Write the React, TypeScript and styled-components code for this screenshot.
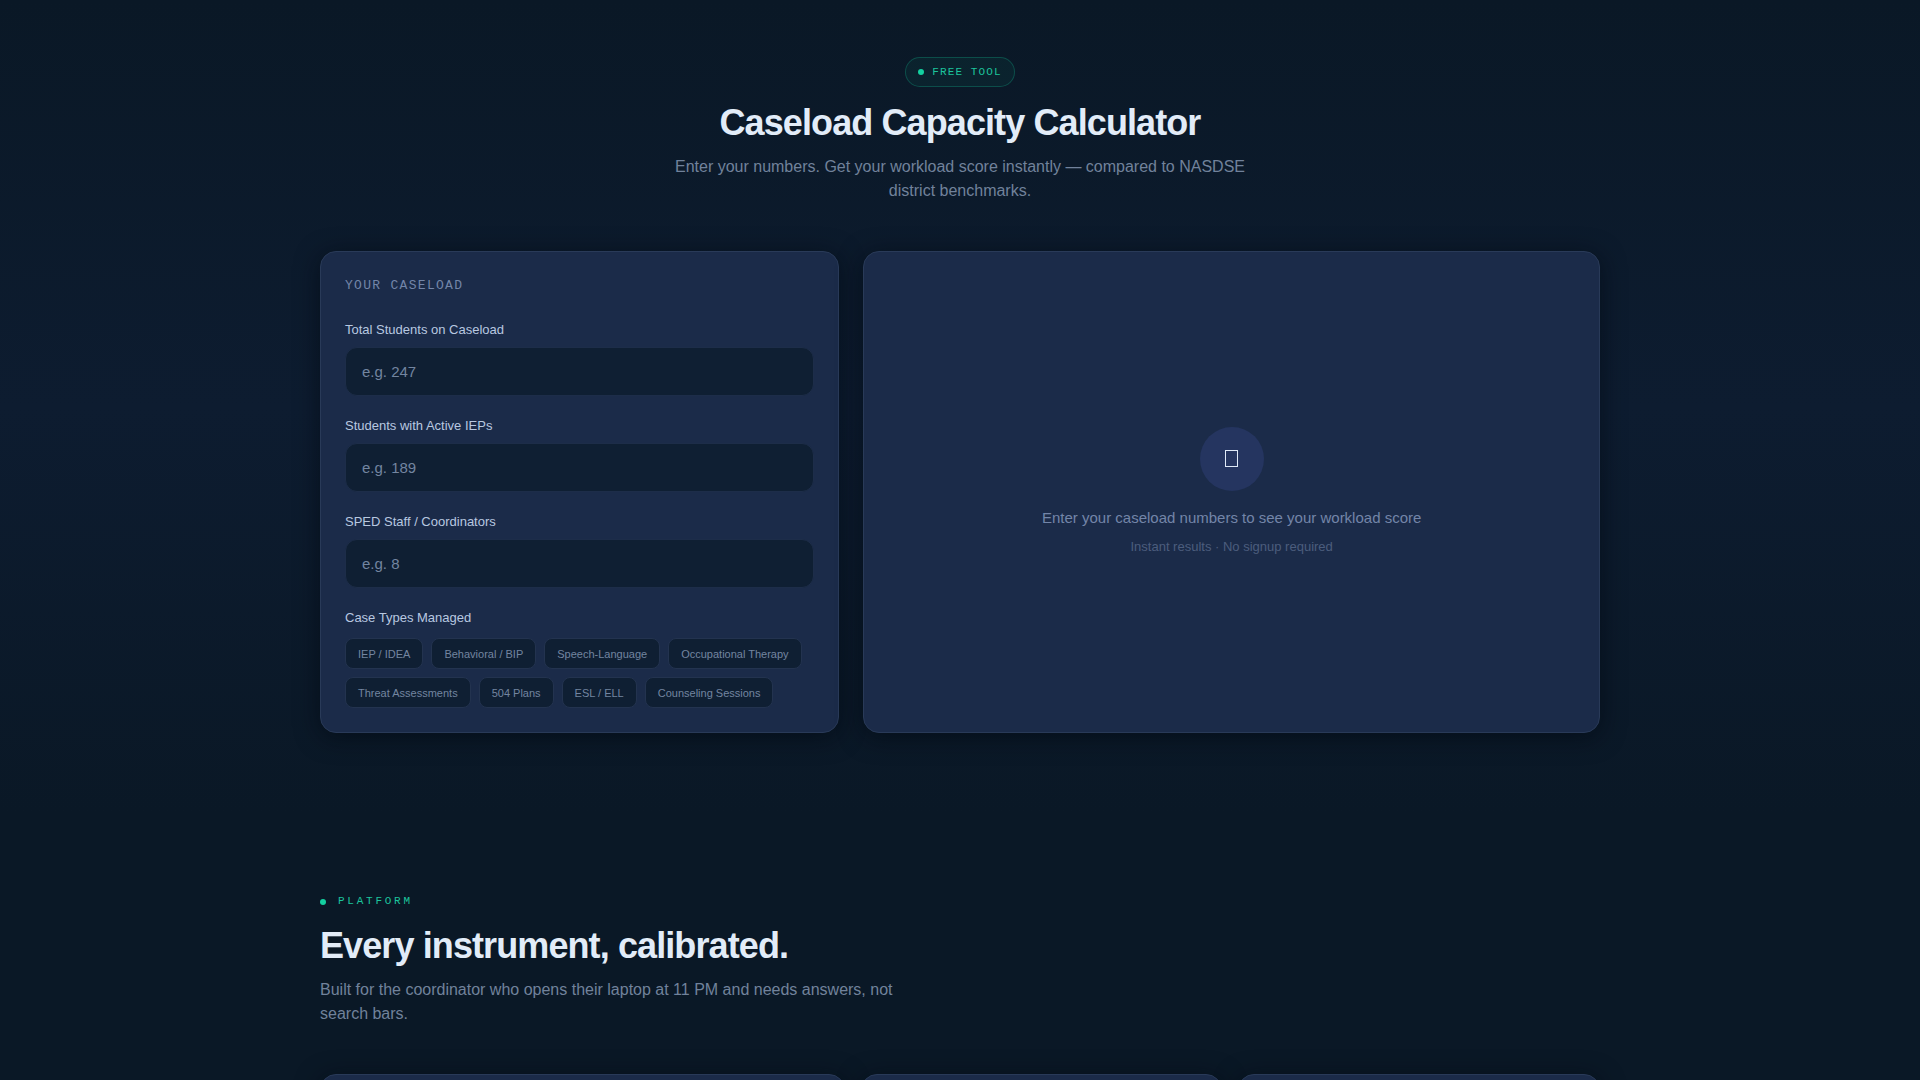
import React, { useState } from "react";
import styled, { createGlobalStyle } from "styled-components";

const sans = `"Liberation Sans", Arial, Helvetica, sans-serif`;
const mono = `"Liberation Mono", "Courier New", monospace`;

const GlobalStyle = createGlobalStyle`
  * { box-sizing: border-box; }
  html { background: #0a1826; }
  body {
    margin: 0;
    min-height: 100vh;
    color: #e2ecf8;
    font-family: ${sans};
    font-size: 16px;
    line-height: 24px;
  }
  h1, h2, p, fieldset { margin: 0; }
`;

const Page = styled.main`
  height: 100vh;
  overflow: hidden;
`;

const CalculatorSection = styled.section`
  padding: 57px 24px 80px;
  background: linear-gradient(180deg, #0a1826 0%, #0d1c30 50%, #0a1826 100%);
`;

const PlatformSection = styled.section`
  padding: 80px 24px;
`;

const Container = styled.div`
  max-width: 1280px;
  margin: 0 auto;
`;

const Hero = styled.header`
  display: flex;
  flex-direction: column;
  align-items: center;
  margin-bottom: 48px;
  text-align: center;
`;

const Badge = styled.span`
  display: inline-flex;
  align-items: center;
  gap: 8px;
  height: 30px;
  padding: 0 12px;
  margin-bottom: 14px;
  border: 1px solid rgba(20, 208, 160, 0.25);
  border-radius: 15px;
  background: rgba(20, 208, 160, 0.06);
  color: #1cc49c;
  font-family: ${mono};
  font-size: 11px;
  letter-spacing: 0.1em;
  text-transform: uppercase;
`;

const Dot = styled.span`
  width: 6px;
  height: 6px;
  border-radius: 50%;
  background: #14d0a0;
`;

const Title = styled.h1`
  margin-bottom: 10px;
  color: #e2ecf8;
  font-size: 36px;
  font-weight: 700;
  line-height: 44px;
  letter-spacing: -0.025em;
`;

const Lead = styled.p`
  max-width: 576px;
  color: #71829b;
  font-size: 16px;
  line-height: 24px;
`;

const CalculatorGrid = styled.div`
  display: grid;
  grid-template-columns: repeat(12, 1fr);
  gap: 24px;
`;

const Card = styled.div`
  border: 1px solid #293a58;
  border-radius: 16px;
  background: #1b2b49;
  box-shadow: 0 4px 24px rgba(0, 8, 16, 0.6);
`;

const FormCard = styled(Card).attrs({ as: "form" })`
  grid-column: span 5;
  display: flex;
  flex-direction: column;
  gap: 20px;
  padding: 24px;
`;

const CardHeading = styled.h2`
  margin-bottom: 5px;
  color: #7385a8;
  font-family: ${mono};
  font-size: 13px;
  font-weight: 400;
  line-height: 19px;
  letter-spacing: 0.1em;
  text-transform: uppercase;
`;

const Field = styled.div`
  display: flex;
  flex-direction: column;
  gap: 8px;
`;

const Label = styled.label`
  color: #b8c8e0;
  font-size: 13px;
  line-height: 19px;
`;

const NumberInput = styled.input`
  width: 100%;
  height: 49px;
  padding: 0 16px;
  border: 1px solid #1d2d49;
  border-radius: 12px;
  outline: none;
  background: #0f1f33;
  color: #e2ecf8;
  font-family: ${sans};
  font-size: 15px;
  &::placeholder { color: #7385a0; opacity: 1; }
  &:focus { border-color: #14d0a0; }
`;

const ChipGroup = styled.fieldset`
  min-width: 0;
  padding: 0;
  border: 0;
`;

const Legend = styled.legend`
  padding: 0;
  margin-bottom: 11px;
  color: #b8c8e0;
  font-size: 13px;
  line-height: 19px;
`;

const ChipList = styled.div`
  display: flex;
  flex-wrap: wrap;
  gap: 8px;
`;

const Chip = styled.button<{ $active: boolean }>`
  height: 31px;
  padding: 0 12px;
  border: 1px solid ${(p) => (p.$active ? "#14d0a0" : "#23334f")};
  border-radius: 8px;
  background: #0f1f33;
  color: ${(p) => (p.$active ? "#14d0a0" : "#7385a0")};
  font-family: ${sans};
  font-size: 11px;
  cursor: pointer;
`;

const ResultCard = styled(Card)`
  grid-column: span 7;
  display: flex;
  flex-direction: column;
  align-items: center;
  justify-content: center;
  text-align: center;
`;

const ResultIcon = styled.div`
  display: flex;
  align-items: center;
  justify-content: center;
  width: 64px;
  height: 64px;
  margin-bottom: 16px;
  border-radius: 50%;
  background: #253560;
`;

const ResultText = styled.p`
  margin-bottom: 8px;
  color: #7385a8;
  font-size: 15px;
  line-height: 22px;
`;

const ResultNote = styled.p`
  color: #4c5d7d;
  font-size: 13px;
  line-height: 20px;
`;

const Eyebrow = styled.p`
  display: flex;
  align-items: center;
  gap: 12px;
  margin-bottom: 14px;
  color: #1cc49c;
  font-family: ${mono};
  font-size: 11px;
  line-height: 17px;
  letter-spacing: 0.25em;
  text-transform: uppercase;
`;

const FeatureGrid = styled.div`
  display: grid;
  grid-template-columns: 1.45fr 1fr 1fr;
  gap: 16px;
  margin-top: 48px;
`;

const FeatureCard = styled(Card)`
  min-height: 320px;
`;

const fields = [
  { id: "students", label: "Total Students on Caseload", placeholder: "e.g. 247" },
  { id: "ieps", label: "Students with Active IEPs", placeholder: "e.g. 189" },
  { id: "staff", label: "SPED Staff / Coordinators", placeholder: "e.g. 8" },
];

const caseTypes = [
  "IEP / IDEA",
  "Behavioral / BIP",
  "Speech-Language",
  "Occupational Therapy",
  "Threat Assessments",
  "504 Plans",
  "ESL / ELL",
  "Counseling Sessions",
];

export default function App() {
  const [selected, setSelected] = useState<string[]>([]);
  const toggle = (name: string) =>
    setSelected((list) =>
      list.includes(name) ? list.filter((n) => n !== name) : [...list, name]
    );

  return (
    <Page>
      <GlobalStyle />
      <CalculatorSection>
        <Container>
          <Hero>
            <Badge>
              <Dot />
              Free Tool
            </Badge>
            <Title>Caseload Capacity Calculator</Title>
            <Lead>
              Enter your numbers. Get your workload score instantly — compared to
              NASDSE district benchmarks.
            </Lead>
          </Hero>
          <CalculatorGrid>
            <FormCard>
              <CardHeading>Your Caseload</CardHeading>
              {fields.map((f) => (
                <Field key={f.id}>
                  <Label htmlFor={f.id}>{f.label}</Label>
                  <NumberInput id={f.id} type="number" placeholder={f.placeholder} />
                </Field>
              ))}
              <ChipGroup>
                <Legend>Case Types Managed</Legend>
                <ChipList>
                  {caseTypes.map((name) => (
                    <Chip
                      key={name}
                      type="button"
                      $active={selected.includes(name)}
                      aria-pressed={selected.includes(name)}
                      onClick={() => toggle(name)}
                    >
                      {name}
                    </Chip>
                  ))}
                </ChipList>
              </ChipGroup>
            </FormCard>
            <ResultCard>
              <ResultIcon aria-hidden="true">
                <svg width="14" height="18" viewBox="0 0 14 18" fill="none">
                  <rect x="0.5" y="0.5" width="12" height="16" stroke="#dfe9f7" />
                </svg>
              </ResultIcon>
              <ResultText>Enter your caseload numbers to see your workload score</ResultText>
              <ResultNote>Instant results · No signup required</ResultNote>
            </ResultCard>
          </CalculatorGrid>
        </Container>
      </CalculatorSection>
      <PlatformSection>
        <Container>
          <Eyebrow>
            <Dot />
            Platform
          </Eyebrow>
          <Title as="h2">Every instrument, calibrated.</Title>
          <Lead>
            Built for the coordinator who opens their laptop at 11 PM and needs
            answers, not search bars.
          </Lead>
          <FeatureGrid>
            <FeatureCard />
            <FeatureCard />
            <FeatureCard />
          </FeatureGrid>
        </Container>
      </PlatformSection>
    </Page>
  );
}
